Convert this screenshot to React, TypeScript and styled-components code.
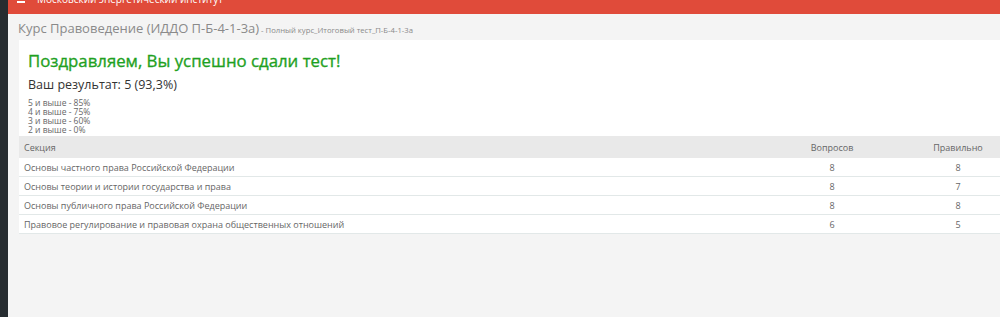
import styled, { createGlobalStyle } from 'styled-components';

const GlobalStyle = createGlobalStyle`
    html, body {
        margin: 0;
        padding: 0;
        background: #f4f4f4;
        font-family: "Open Sans", "Liberation Sans", sans-serif;
    }
`;

const Layout = styled.div`
    display: flex;
    width: 1000px;
    height: 317px;
    overflow: hidden;
`;

const Sidebar = styled.div`
    width: 8px;
    flex-shrink: 0;
    background: #262c30;
`;

const Main = styled.div`
    flex: 1;
    display: flex;
    flex-direction: column;
    background: #f4f4f4;
    min-width: 0;
`;

const TopBar = styled.div`
    height: 14px;
    background: #e04b3a;
    display: flex;
    align-items: flex-end;
    gap: 12px;
    padding-left: 9px;
    overflow: hidden;
`;

const Burger = styled.span`
    width: 8px;
    height: 2px;
    margin-bottom: 11px;
    background: #fff;
    box-shadow: 0 -3px 0 #fff;
`;

const Brand = styled.span`
    color: #fff;
    font-size: 10px;
    line-height: 10px;
    margin-bottom: 10px;
    white-space: nowrap;
`;

const Crumbs = styled.div`
    padding: 2px 0 0 10px;
    height: 26px;
    box-sizing: border-box;
    white-space: nowrap;
    color: #8a8a8a;
`;

const CourseName = styled.span`
    font-size: 13px;
`;

const TestName = styled.span`
    font-size: 7.7px;
`;

const Card = styled.div`
    margin-left: 11px;
    background: #fff;
    padding-top: 8px;
`;

const Intro = styled.div`
    padding: 0 9px;
`;

const Title = styled.h2`
    margin: 0;
    font-size: 16.8px;
    line-height: 26px;
    font-weight: 400;
    color: #1fa11f;
    -webkit-text-stroke: 0.35px #1fa11f;
`;

const Result = styled.div`
    font-size: 12.5px;
    line-height: 17px;
    color: #333;
    margin-top: 2px;
`;

const Grades = styled.div`
    margin-top: 5px;
    font-size: 8.5px;
    line-height: 9px;
    color: #666;
`;

const Table = styled.table`
    width: 100%;
    margin-top: 2px;
    border-collapse: collapse;
    font-size: 9px;
    color: #666;
`;

const Th = styled.th<{ $w?: number; $center?: boolean }>`
    background: #e9e9e9;
    height: 22px;
    padding: 0 5px;
    font-weight: 400;
    text-align: ${p => (p.$center ? 'center' : 'left')};
    width: ${p => (p.$w ? `${p.$w}px` : 'auto')};
`;

const Td = styled.td<{ $center?: boolean }>`
    height: 18px;
    padding: 0 5px;
    border-bottom: 1px solid #e2e8e8;
    text-align: ${p => (p.$center ? 'center' : 'left')};
`;

const rows = [
    { name: 'Основы частного права Российской Федерации', total: 8, ok: 8 },
    { name: 'Основы теории и истории государства и права', total: 8, ok: 7 },
    { name: 'Основы публичного права Российской Федерации', total: 8, ok: 8 },
    { name: 'Правовое регулирование и правовая охрана общественных отношений', total: 6, ok: 5 },
];

const grades = ['5 и выше - 85%', '4 и выше - 75%', '3 и выше - 60%', '2 и выше - 0%'];

export default function App() {
    return (
        <>
            <GlobalStyle />
            <Layout>
                <Sidebar />
                <Main>
                    <TopBar>
                        <Burger />
                        <Brand>Московский энергетический институт</Brand>
                    </TopBar>
                    <Crumbs>
                        <CourseName>Курс Правоведение (ИДДО П-Б-4-1-3а)</CourseName>
                        <TestName> - Полный курс_Итоговый тест_П-Б-4-1-3а</TestName>
                    </Crumbs>
                    <Card>
                        <Intro>
                            <Title>Поздравляем, Вы успешно сдали тест!</Title>
                            <Result>Ваш результат: 5 (93,3%)</Result>
                            <Grades>
                                {grades.map(g => (
                                    <div key={g}>{g}</div>
                                ))}
                            </Grades>
                        </Intro>
                        <Table>
                            <thead>
                                <tr>
                                    <Th>Секция</Th>
                                    <Th $w={158} $center>Вопросов</Th>
                                    <Th $w={74} $center>Правильно</Th>
                                </tr>
                            </thead>
                            <tbody>
                                {rows.map(r => (
                                    <tr key={r.name}>
                                        <Td>{r.name}</Td>
                                        <Td $center>{r.total}</Td>
                                        <Td $center>{r.ok}</Td>
                                    </tr>
                                ))}
                            </tbody>
                        </Table>
                    </Card>
                </Main>
            </Layout>
        </>
    );
}
